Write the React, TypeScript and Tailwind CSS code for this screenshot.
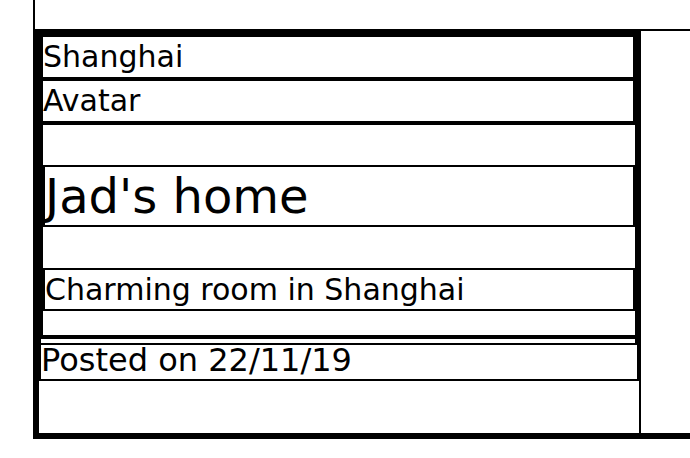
const Row = ({ children }: { children?: React.ReactNode }) => (
	<div className="border-2 border-black h-[44px] text-[30px] leading-[39px]">{children}</div>
)

const App = () => {
	return (
		<main className="min-h-screen bg-white pl-[33px] text-black font-['DejaVu_Sans',sans-serif]">
			<div className="h-[29px] border-l-2 border-black"/>

			<div className="flex border-b-[6px] border-black">
				<article className="w-[608px] shrink-0 border-l-[6px] border-t-[6px] border-r-2 border-black">
					<section className="border-l-2 border-r-4 border-black pb-[4px]">
						<Row>Shanghai</Row>
						<Row>Avatar</Row>

						<div className="border-l-2 border-t-2 border-b-4 border-black pt-[40px] pb-[24px]">
							<h1 className="border-2 border-black text-[48px] leading-[58px] whitespace-nowrap">Jad's home</h1>
							<p className="mt-[41px] border-2 border-black text-[30px] leading-[39px] whitespace-nowrap">Charming room in Shanghai</p>
						</div>
					</section>

					<div className="border-2 border-black h-[38px] text-[32px] leading-[30px] whitespace-nowrap">Posted on 22/11/19</div>
					<div className="h-[52px]"/>
				</article>

				<aside className="flex-1 border-t-2 border-black"/>
			</div>
		</main>
	)
}

export default App
